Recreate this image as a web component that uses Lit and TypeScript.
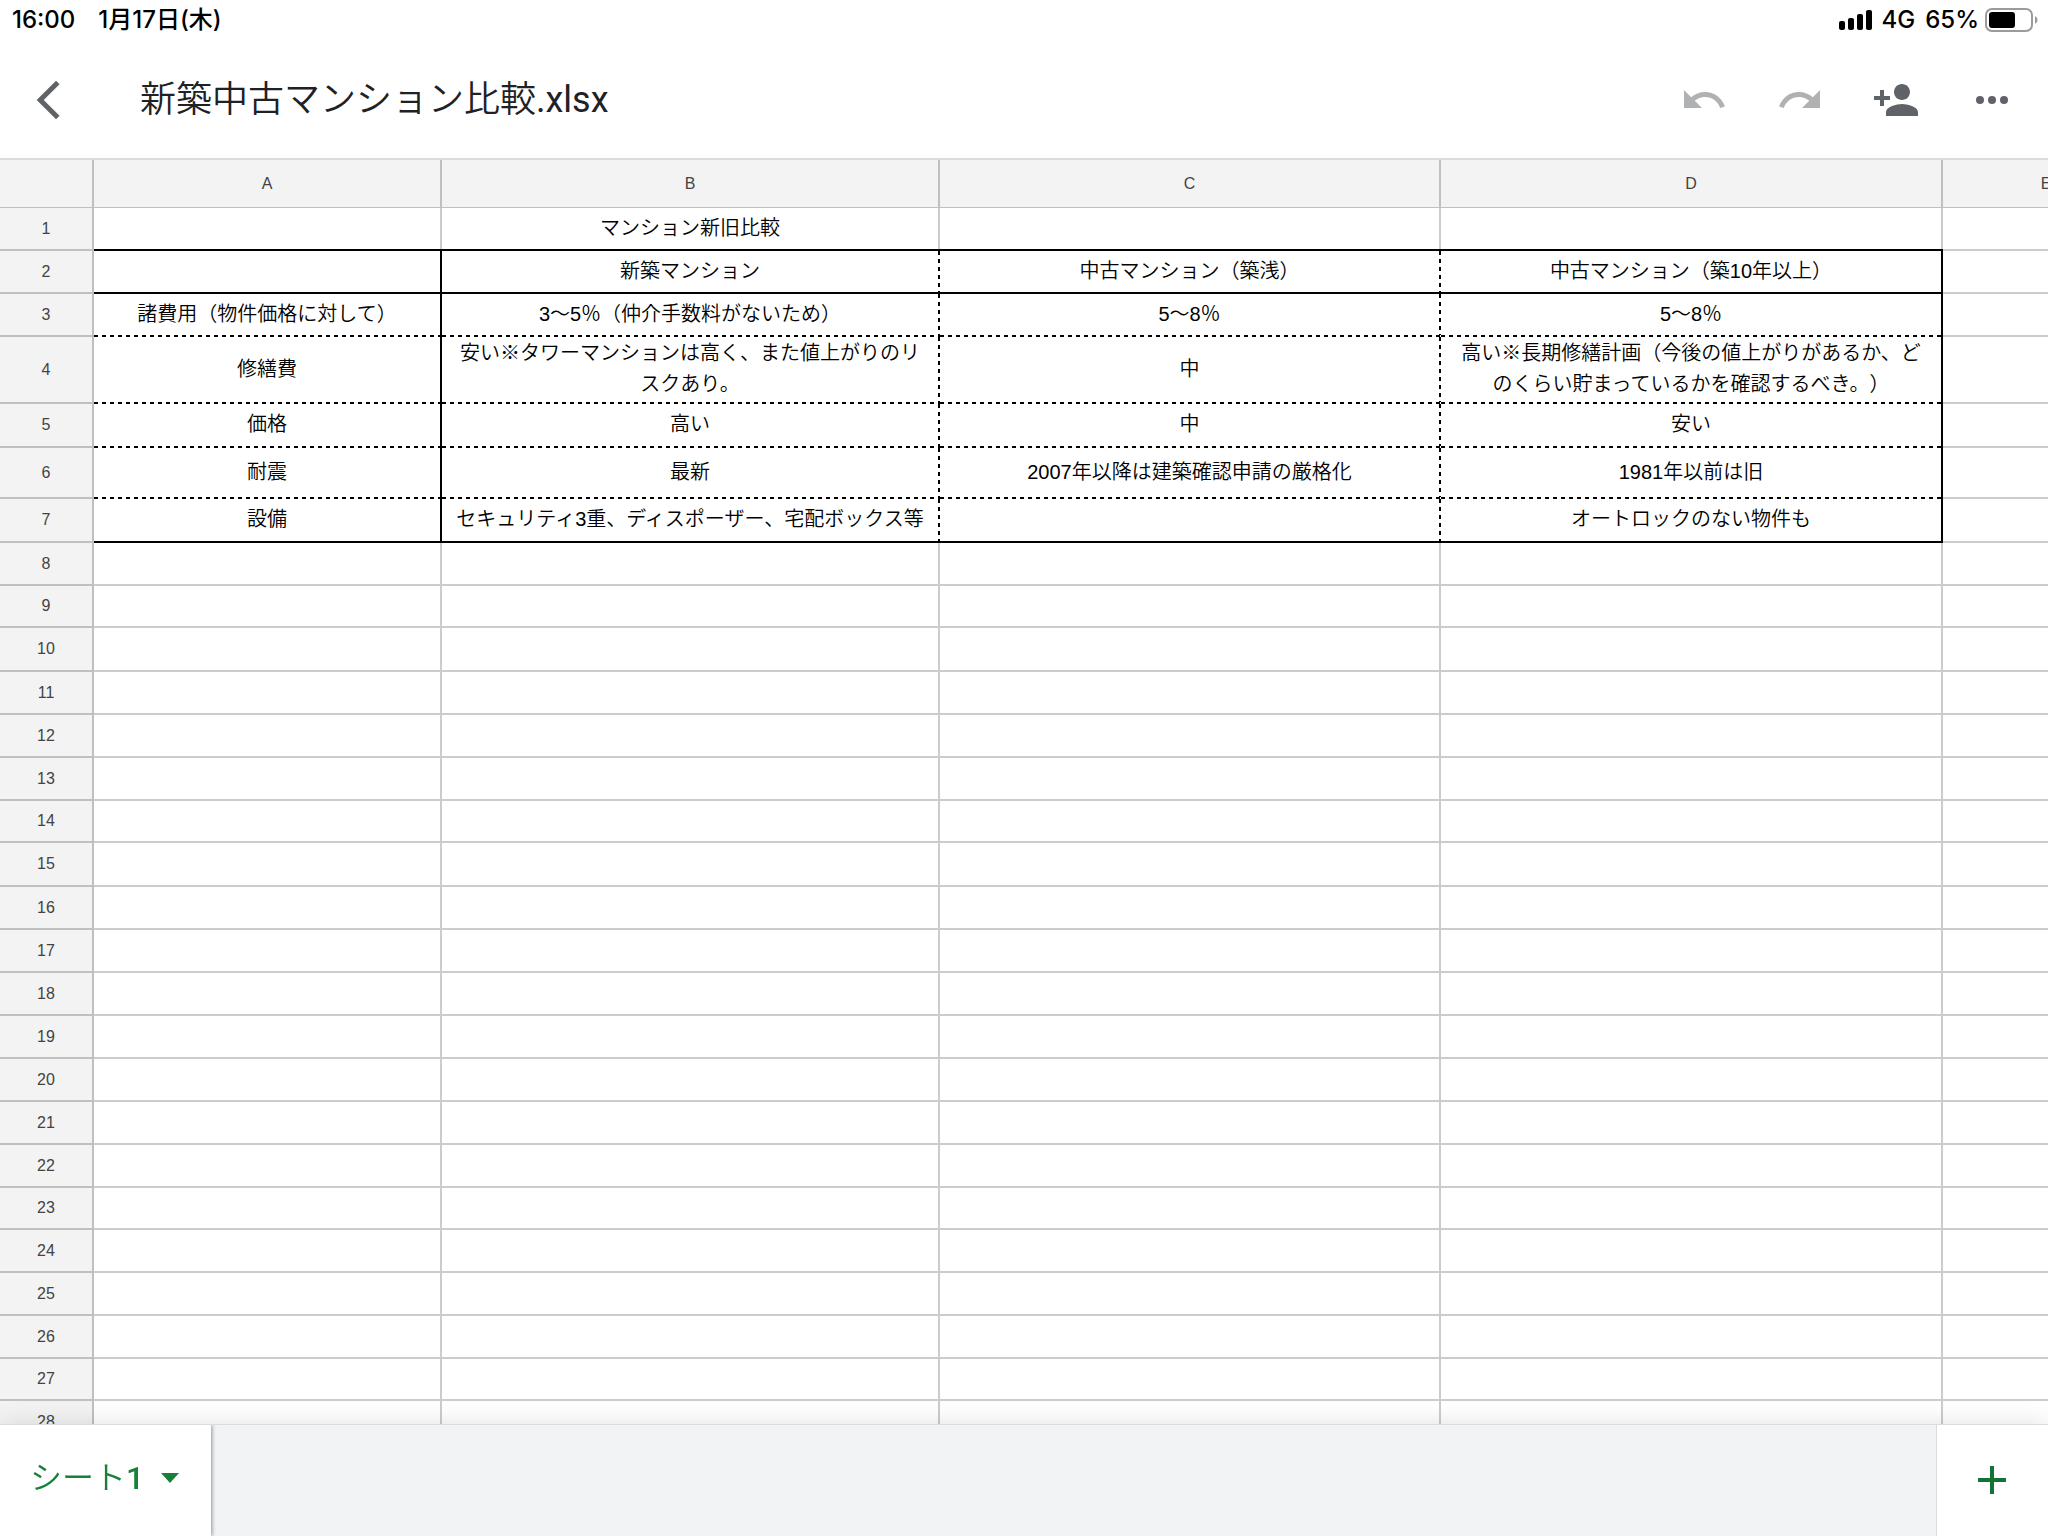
import { LitElement, html, css, svg, nothing } from "lit";
import { customElement, property, state } from "lit/decorators.js";
import { classMap } from "lit/directives/class-map.js";
import { styleMap } from "lit/directives/style-map.js";

type Line = "grid" | "dash" | "solid";

interface Column {
  name: string;
  width: number;
}

const HEADER_WIDTH = 94;

const COLUMNS: Column[] = [
  { name: "A", width: 348 },
  { name: "B", width: 498 },
  { name: "C", width: 501 },
  { name: "D", width: 502 },
  { name: "E", width: 208 },
];

const ROW_HEIGHTS = [
  43, 43, 43, 67, 44, 51, 44, 43, 42, 44, 43, 43, 43, 42,
  44, 43, 43, 43, 43, 43, 43, 43, 42, 43, 43, 43, 42, 43,
];

const CELLS: string[][] = [
  ["", "マンション新旧比較", "", ""],
  ["", "新築マンション", "中古マンション（築浅）", "中古マンション（築10年以上）"],
  ["諸費用（物件価格に対して）", "3〜5％（仲介手数料がないため）", "5〜8％", "5〜8％"],
  [
    "修繕費",
    "安い※タワーマンションは高く、また値上がりのリスクあり。",
    "中",
    "高い※長期修繕計画（今後の値上がりがあるか、どのくらい貯まっているかを確認するべき。）",
  ],
  ["価格", "高い", "中", "安い"],
  ["耐震", "最新", "2007年以降は建築確認申請の厳格化", "1981年以前は旧"],
  ["設備", "セキュリティ3重、ディスポーザー、宅配ボックス等", "", "オートロックのない物件も"],
];

/* The bordered range is A2:D7; its top edge is the bottom line of row 1. */
function bottomLine(row: number, col: number): Line {
  if (col > 3 || row > 6) return "grid";
  if (row === 0 || row === 1 || row === 6) return "solid";
  return "dash";
}

function rightLine(row: number, col: number): Line {
  if (row < 1 || row > 6 || col > 3) return "grid";
  return col === 0 || col === 3 ? "solid" : "dash";
}

@customElement("status-bar")
class StatusBar extends LitElement {
  static styles = css`
    :host {
      display: flex;
      align-items: center;
      box-sizing: border-box;
      height: 42px;
      padding: 0 10px 2px 12px;
      font: 500 24px/32px Inter, "Noto Sans CJK JP", sans-serif;
      color: #000;
    }
    .date {
      margin-left: 23px;
      flex: 1;
    }
    .net {
      margin: 0 10px;
    }
    .level {
      margin-right: 6px;
    }
    svg {
      display: block;
    }
  `;

  render() {
    return html`
      <time>16:00</time>
      <span class="date">1月17日(木)</span>
      <svg width="33" height="20" viewBox="0 0 33 20" aria-hidden="true">
        <rect x="0" y="11" width="6" height="9" rx="2" />
        <rect x="9" y="8" width="6" height="12" rx="2" />
        <rect x="18" y="4" width="6" height="16" rx="2" />
        <rect x="27" y="0" width="6" height="20" rx="2" />
      </svg>
      <span class="net">4G</span>
      <span class="level">65%</span>
      <svg width="53" height="24" viewBox="0 0 53 24" aria-hidden="true">
        <rect x="1" y="1" width="46" height="22" rx="6" fill="none" stroke="#9b9b9b" stroke-width="2" />
        <rect x="4" y="4" width="26" height="16" rx="3" />
        <path d="M50 8a4.4 4.4 0 0 1 0 8z" fill="#9b9b9b" />
      </svg>
    `;
  }
}

@customElement("tool-bar")
class ToolBar extends LitElement {
  @property() name = "";

  static styles = css`
    :host {
      display: flex;
      align-items: center;
      box-sizing: border-box;
      height: 118px;
      border-bottom: 2px solid #dadce0;
      padding-right: 8px;
    }
    button {
      display: flex;
      align-items: center;
      justify-content: center;
      width: 96px;
      height: 96px;
      padding: 0;
      border: 0;
      background: none;
      color: #5f6368;
    }
    button:disabled {
      color: #b0b1b3;
    }
    svg {
      width: 48px;
      height: 48px;
      fill: currentColor;
    }
    .chevron {
      fill: none;
      stroke: currentColor;
      stroke-width: 5;
    }
    h1 {
      flex: 1;
      margin: 0 0 0 44px;
      font: 400 36px/48px Roboto, "Noto Sans CJK JP DemiLight", "Noto Sans CJK JP", sans-serif;
      color: #202124;
      white-space: nowrap;
    }
  `;

  render() {
    return html`
      <button aria-label="戻る">
        <svg class="chevron" viewBox="0 0 48 48" aria-hidden="true">
          <path d="M33.8 6.4 16.2 24l17.6 17.6" />
        </svg>
      </button>
      <h1>${this.name}</h1>
      <button aria-label="元に戻す" disabled>
        <svg viewBox="0 0 24 24" aria-hidden="true">
          <path d="M12.5 8c-2.65 0-5.05.99-6.9 2.6L2 7v9h9l-3.62-3.62c1.39-1.16 3.16-1.88 5.12-1.88 3.54 0 6.55 2.31 7.6 5.5l2.37-.78C21.08 11.03 17.15 8 12.5 8z" />
        </svg>
      </button>
      <button aria-label="やり直す" disabled>
        <svg viewBox="0 0 24 24" aria-hidden="true">
          <path d="M18.4 10.6C16.55 8.99 14.15 8 11.5 8c-4.65 0-8.58 3.03-9.96 7.22L3.9 16c1.05-3.19 4.05-5.5 7.6-5.5 1.95 0 3.73.72 5.12 1.88L13 16h9V7l-3.6 3.6z" />
        </svg>
      </button>
      <button aria-label="共有">
        <svg viewBox="0 0 24 24" aria-hidden="true">
          <path d="M15 12c2.21 0 4-1.79 4-4s-1.79-4-4-4-4 1.79-4 4 1.79 4 4 4zm-9-2V7H4v3H1v2h3v3h2v-3h3v-2H6zm9 4c-2.67 0-8 1.34-8 4v2h16v-2c0-2.66-5.33-4-8-4z" />
        </svg>
      </button>
      <button aria-label="その他">
        <svg viewBox="0 0 24 24" aria-hidden="true">
          ${[6, 12, 18].map((x) => svg`<circle cx=${x} cy="12" r="2" />`)}
        </svg>
      </button>
    `;
  }
}

@customElement("sheet-grid")
class SheetGrid extends LitElement {
  static styles = css`
    :host {
      display: block;
      overflow: auto;
      scrollbar-width: none;
      background: #fff;
    }
    table {
      table-layout: fixed;
      width: max-content;
      border-collapse: separate;
      border-spacing: 0;
      font-family: "Liberation Sans", "Noto Sans CJK JP DemiLight", "Noto Sans CJK JP", sans-serif;
      text-spacing-trim: space-all;
    }
    th {
      box-sizing: border-box;
      padding: 0;
      background: #f3f3f3;
      border: 0 solid #c0c0c0;
      border-right-width: 2px;
      font-size: 16px;
      line-height: 20px;
      font-weight: 400;
      color: #434343;
    }
    .column {
      height: 48px;
      border-bottom-width: 1px;
    }
    .row {
      border-bottom-width: 2px;
    }
    td {
      box-sizing: border-box;
      padding: 0 14px 3px 12px;
      font-size: 20px;
      line-height: 31px;
      font-weight: 400;
      text-align: center;
      vertical-align: middle;
      color: #000;
      --bottom: linear-gradient(#ccc, #ccc);
      --right: linear-gradient(#ccc, #ccc);
      background: var(--bottom) bottom / 100% 2px no-repeat,
        var(--right) right / 2px 100% no-repeat;
    }
    .bottom-dash {
      --bottom: repeating-linear-gradient(90deg, #000 0 4px, #fff 4px 8px);
    }
    .bottom-solid {
      --bottom: linear-gradient(#000, #000);
    }
    .right-dash {
      --right: repeating-linear-gradient(#000 0 4px, #fff 4px 8px);
    }
    .right-solid {
      --right: linear-gradient(#000, #000);
      background: var(--right) right / 2px 100% no-repeat,
        var(--bottom) bottom / 100% 2px no-repeat;
    }
  `;

  private renderCell(row: number, col: number) {
    const bottom = bottomLine(row, col);
    const right = rightLine(row, col);
    const classes = {
      "bottom-dash": bottom === "dash",
      "bottom-solid": bottom === "solid",
      "right-dash": right === "dash",
      "right-solid": right === "solid",
    };
    return html`<td class=${classMap(classes)}>${CELLS[row]?.[col] || nothing}</td>`;
  }

  render() {
    const widths = [HEADER_WIDTH, ...COLUMNS.map((c) => c.width)];
    const total = widths.reduce((sum, w) => sum + w, 0);
    return html`
      <table style=${styleMap({ width: `${total}px` })}>
        <colgroup>
          ${widths.map((w) => html`<col style=${styleMap({ width: `${w}px` })} />`)}
        </colgroup>
        <thead>
          <tr>
            <th class="column"></th>
            ${COLUMNS.map((c) => html`<th class="column" scope="col">${c.name}</th>`)}
          </tr>
        </thead>
        <tbody>
          ${ROW_HEIGHTS.map(
            (height, row) => html`
              <tr style=${styleMap({ height: `${height}px` })}>
                <th class="row" scope="row">${row + 1}</th>
                ${COLUMNS.map((_, col) => this.renderCell(row, col))}
              </tr>
            `
          )}
        </tbody>
      </table>
    `;
  }
}

@customElement("sheet-tabs")
class SheetTabs extends LitElement {
  @state() private sheets = ["シート1"];

  static styles = css`
    :host {
      display: flex;
      position: relative;
      height: 111px;
      border-top: 1px solid #dadce0;
      background: #f1f3f4;
      box-shadow: 0 0 24px rgba(0, 0, 0, 0.12);
    }
    button {
      display: flex;
      align-items: center;
      border: 0;
      background: #fff;
    }
    .strip {
      display: flex;
      flex: 1;
      overflow: hidden;
    }
    .tab {
      gap: 17px;
      padding: 0 32px 6px 30px;
      box-shadow: 1px 0 4px rgba(0, 0, 0, 0.4);
      font: 500 32px/40px Roboto, "Noto Sans CJK JP DemiLight", "Noto Sans CJK JP", sans-serif;
      color: #188038;
    }
    .add {
      justify-content: center;
      box-sizing: border-box;
      width: 112px;
      padding: 0 1px 1px 0;
      border-left: 1px solid #dadce0;
      color: #137333;
    }
    svg {
      display: block;
      fill: currentColor;
    }
  `;

  render() {
    return html`
      <div class="strip">
        ${this.sheets.map(
          (name) => html`
            <button class="tab" aria-haspopup="menu">
              <span>${name}</span>
              <svg width="18" height="10" viewBox="0 0 18 10" aria-hidden="true">
                <path d="M0 0h18L9 10z" />
              </svg>
            </button>
          `
        )}
      </div>
      <button class="add" aria-label="シートを追加">
        <svg width="28" height="28" viewBox="0 0 28 28" aria-hidden="true">
          <path d="M12 0h4v12h12v4H16v12h-4V16H0v-4h12z" />
        </svg>
      </button>
    `;
  }
}

@customElement("app-root")
class AppRoot extends LitElement {
  static styles = css`
    :host {
      display: flex;
      flex-direction: column;
      height: 100vh;
      overflow: hidden;
      background: #fff;
    }
    .grid {
      flex: 1;
      min-height: 0;
    }
  `;

  render() {
    return html`
      <status-bar></status-bar>
      <tool-bar name="新築中古マンション比較.xlsx"></tool-bar>
      <sheet-grid class="grid"></sheet-grid>
      <sheet-tabs></sheet-tabs>
    `;
  }
}
